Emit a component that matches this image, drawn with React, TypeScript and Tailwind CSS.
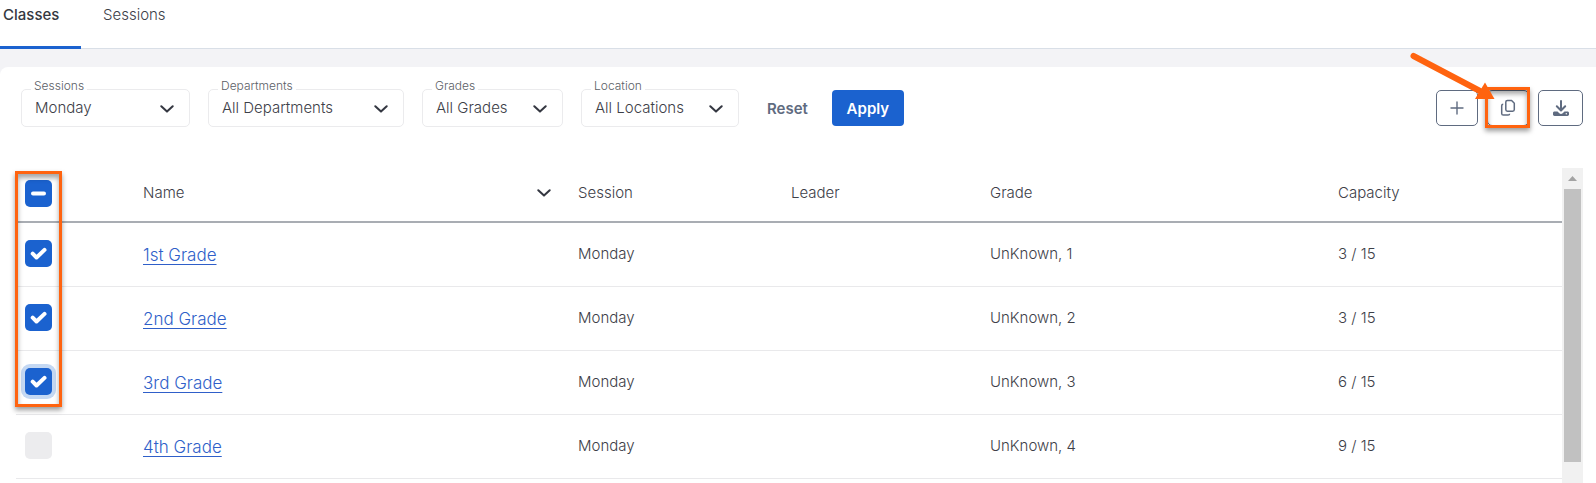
import { useState } from "react";
import clsx from "clsx";

interface ClassRow {
  id: number;
  name: string;
  session: string;
  leader: string;
  grade: string;
  capacity: string;
}

const CLASSES: ClassRow[] = [
  { id: 1, name: "1st Grade", session: "Monday", leader: "", grade: "UnKnown, 1", capacity: "3 / 15" },
  { id: 2, name: "2nd Grade", session: "Monday", leader: "", grade: "UnKnown, 2", capacity: "3 / 15" },
  { id: 3, name: "3rd Grade", session: "Monday", leader: "", grade: "UnKnown, 3", capacity: "6 / 15" },
  { id: 4, name: "4th Grade", session: "Monday", leader: "", grade: "UnKnown, 4", capacity: "9 / 15" },
];

const FILTERS = [
  { id: "sessions", label: "Sessions", value: "Monday", width: "w-[169px]" },
  { id: "departments", label: "Departments", value: "All Departments", width: "w-[196px]" },
  { id: "grades", label: "Grades", value: "All Grades", width: "w-[141px]" },
  { id: "location", label: "Location", value: "All Locations", width: "w-[158px]" },
];

function Chevron({ className }: { className?: string }) {
  return (
    <svg
      className={className}
      width="14"
      height="8"
      viewBox="0 0 14 8"
      fill="none"
      stroke="#343741"
      strokeWidth="2"
      strokeLinecap="round"
      strokeLinejoin="round"
      aria-hidden="true"
    >
      <path d="M1.3 1.2 7 6.6l5.7-5.4" />
    </svg>
  );
}

interface FilterSelectProps {
  id: string;
  label: string;
  value: string;
  width: string;
}

function FilterSelect({ id, label, value, width }: FilterSelectProps) {
  return (
    <div className={clsx("relative", width)}>
      <label htmlFor={id} className="absolute -top-[11px] left-[10px] bg-white px-[3px] text-xs leading-4 text-[#5b5e66]">
        {label}
      </label>
      <select
        id={id}
        defaultValue={value}
        className="h-[38px] w-full appearance-none rounded-[5px] border border-[#ebebed] bg-transparent pr-8 pl-[13px] text-[15px] text-[#3d4048]"
      >
        <option>{value}</option>
      </select>
      <Chevron className="pointer-events-none absolute top-4 right-4" />
    </div>
  );
}

interface CheckboxProps {
  label: string;
  checked: boolean;
  mixed?: boolean;
  focused?: boolean;
  onChange: () => void;
}

function Checkbox({ label, checked, mixed, focused, onChange }: CheckboxProps) {
  return (
    <span className="grid size-[27px] place-items-center">
      <input
        type="checkbox"
        aria-label={label}
        checked={checked}
        onChange={onChange}
        className={clsx(
          "col-start-1 row-start-1 size-[27px] appearance-none rounded-[5px] bg-[#ececee] checked:bg-[#1b62cf]",
          focused && "ring-4 ring-[#c4d8f3]"
        )}
      />
      {checked && (
        <svg
          className="pointer-events-none col-start-1 row-start-1"
          width="17"
          height="17"
          viewBox="0 0 17 17"
          fill="none"
          stroke="white"
          strokeWidth="4"
          strokeLinecap="round"
          strokeLinejoin="round"
          aria-hidden="true"
        >
          {mixed ? <path d="M3 8.5h11" /> : <path d="m2.7 8.7 3.8 3.8 8-7.6" />}
        </svg>
      )}
    </span>
  );
}

// Orange call-out frame, drops a shadow on both sides of its edge
const FRAME =
  "pointer-events-none absolute border-[3px] border-[#ff630f] shadow-[0_3px_5px_rgba(0,0,0,0.4),inset_0_4px_5px_rgba(0,0,0,0.35)]";

const ICON_BUTTON = "flex h-9 items-center justify-center rounded-[5px] border border-[#5f6b80] bg-white text-[#5f6b80]";

function Toolbar() {
  return (
    <div className="ml-auto flex gap-[9px]">
      <button type="button" aria-label="Add class" className={clsx(ICON_BUTTON, "w-[42px]")}>
        <svg width="14" height="14" viewBox="0 0 14 14" stroke="currentColor" strokeWidth="1.4" strokeLinecap="round">
          <path d="M7 1v12M1 7h12" />
        </svg>
      </button>
      <div className="relative">
        <button type="button" aria-label="Copy classes" className={clsx(ICON_BUTTON, "w-[42px]")}>
          <svg width="16" height="18" viewBox="0 0 16 18" fill="none" stroke="currentColor" strokeWidth="1.5" strokeLinejoin="round">
            <path d="M7.400 1.500h4.200l2.700 2.700v6.400a1.600 1.600 0 0 1-1.600 1.600H7.400a1.600 1.600 0 0 1-1.600-1.600V3.100a1.600 1.600 0 0 1 1.600-1.600Z" />
            <path d="M3.200 5.200c-1 0-1.500.6-1.500 1.500v7.800c0 1 .6 1.600 1.600 1.600h4.800c1 0 1.500-.5 1.500-1.300" />
          </svg>
        </button>
        <div className={clsx(FRAME, "-top-[3px] -right-px -bottom-[2px] -left-[2px]")} />
        <svg className="pointer-events-none absolute -top-[38px] -left-[77px]" width="86" height="52" viewBox="0 0 86 52" aria-hidden="true">
          <path d="M3.5 4 70 39" stroke="#ff630f" strokeWidth="6" strokeLinecap="round" />
          <path d="M75 30.5 84.500 47 65 47Z" fill="#ff630f" />
        </svg>
      </div>
      <button type="button" aria-label="Download classes" className={clsx(ICON_BUTTON, "w-[45px]")}>
        <svg width="16" height="17" viewBox="0 0 16 17" fill="none" stroke="currentColor">
          <path d="M8 1v9M3.800 6.300 8 10.500l4.200-4.200" strokeWidth="2" strokeLinecap="round" strokeLinejoin="round" />
          <path
            d="M1.500 11.500h3l1.800 1.700a2.500 2.500 0 0 0 3.400 0l1.800-1.700h3c.8 0 1.500.6 1.500 1.400v1.700c0 .8-.7 1.400-1.500 1.400h-13C.7 16 0 15.400 0 14.600v-1.700c0-.8.700-1.400 1.500-1.400Z"
            fill="currentColor"
            stroke="none"
          />
          <circle cx="13.300" cy="13.800" r=".7" fill="white" stroke="none" />
        </svg>
      </button>
    </div>
  );
}

function ScrollTrack() {
  return (
    <div className="flex w-[21px] shrink-0 flex-col bg-[#f1f1f1] px-[2px]" aria-hidden="true">
      <div className="flex h-[21px] items-center justify-center">
        <svg width="9" height="5" viewBox="0 0 9 5">
          <path d="M4.500 0 9 5H0Z" fill="#a3a3a3" />
        </svg>
      </div>
      <div className="flex-[13] bg-[#c1c1c1]" />
      <div className="flex-1" />
    </div>
  );
}

const HEAD_CELL = "px-[9px] pb-[3px] font-light";

export default function App() {
  const [selected, setSelected] = useState<number[]>([1, 2, 3]);

  const toggle = (id: number) =>
    setSelected((prev) => (prev.includes(id) ? prev.filter((x) => x !== id) : [...prev, id]));

  const toggleAll = () => setSelected(selected.length > 0 ? [] : CLASSES.map((c) => c.id));

  return (
    <div className="flex min-h-screen flex-col bg-[#f3f3f6] font-['Inter',sans-serif] text-[15px] leading-5 font-light text-[#3d4048]">
      <nav className="flex h-[49px] border-b border-[#d9dfe7] bg-white">
        <a href="#classes" className="-mb-px w-[81px] border-b-[3px] border-[#1b62cf] pt-[5px] pl-[3px] font-medium text-[#343741]">
          Classes
        </a>
        <a href="#sessions" className="pt-[5px] pl-[22px]">
          Sessions
        </a>
      </nav>

      <main className="mt-[18px] flex flex-1 flex-col rounded-tl-lg bg-white">
        <div className="flex items-center pt-[22px] pr-[13px] pl-[21px]">
          <div className="flex gap-[18px]">
            {FILTERS.map((f) => (
              <FilterSelect key={f.id} {...f} />
            ))}
          </div>
          <button type="button" className="ml-7 pt-px font-semibold text-[#5f6b80]">
            Reset
          </button>
          <button type="button" className="ml-6 h-9 w-[72px] rounded-[4px] bg-[#1b62cf] pt-px font-semibold text-white">
            Apply
          </button>
          <Toolbar />
        </div>

        <div className="mt-[41px] flex flex-1 pr-[13px] pl-4">
          <div className="relative flex-1">
            <table className="w-full table-fixed border-collapse text-left">
              <colgroup>
                <col className="w-[118px]" />
                <col className="w-[435px]" />
                <col className="w-[213px]" />
                <col className="w-[199px]" />
                <col className="w-[348px]" />
                <col className="w-[233px]" />
              </colgroup>
              <thead>
                <tr className="h-[54px] border-b-2 border-[#a9adb3]">
                  <th className={HEAD_CELL}>
                    <Checkbox
                      label="Select all classes"
                      checked={selected.length > 0}
                      mixed={selected.length < CLASSES.length}
                      onChange={toggleAll}
                    />
                  </th>
                  <th className={HEAD_CELL}>
                    <div className="flex items-center justify-between pr-[9px]">
                      Name
                      <Chevron />
                    </div>
                  </th>
                  <th className={HEAD_CELL}>Session</th>
                  <th className={HEAD_CELL}>Leader</th>
                  <th className={HEAD_CELL}>Grade</th>
                  <th className={HEAD_CELL}>Capacity</th>
                </tr>
              </thead>
              <tbody>
                {CLASSES.map((c) => (
                  <tr key={c.id} className="h-16 border-b border-[#e9e9eb]">
                    <td className="px-[9px] pb-[2px]">
                      <Checkbox
                        label={`Select ${c.name}`}
                        checked={selected.includes(c.id)}
                        focused={c.id === 3}
                        onChange={() => toggle(c.id)}
                      />
                    </td>
                    <td className="px-[9px] pt-[2px]">
                      <a href={`#class-${c.id}`} className="text-[17px] text-[#2f5fc9] underline underline-offset-3">
                        {c.name}
                      </a>
                    </td>
                    <td className="px-[9px]">{c.session}</td>
                    <td className="px-[9px]">{c.leader}</td>
                    <td className="px-[9px]">{c.grade}</td>
                    <td className="px-[9px]">{c.capacity}</td>
                  </tr>
                ))}
              </tbody>
            </table>
            <div className={clsx(FRAME, "top-[3px] -left-px h-[236px] w-[47px]")} />
          </div>
          <ScrollTrack />
        </div>
      </main>
    </div>
  );
}
